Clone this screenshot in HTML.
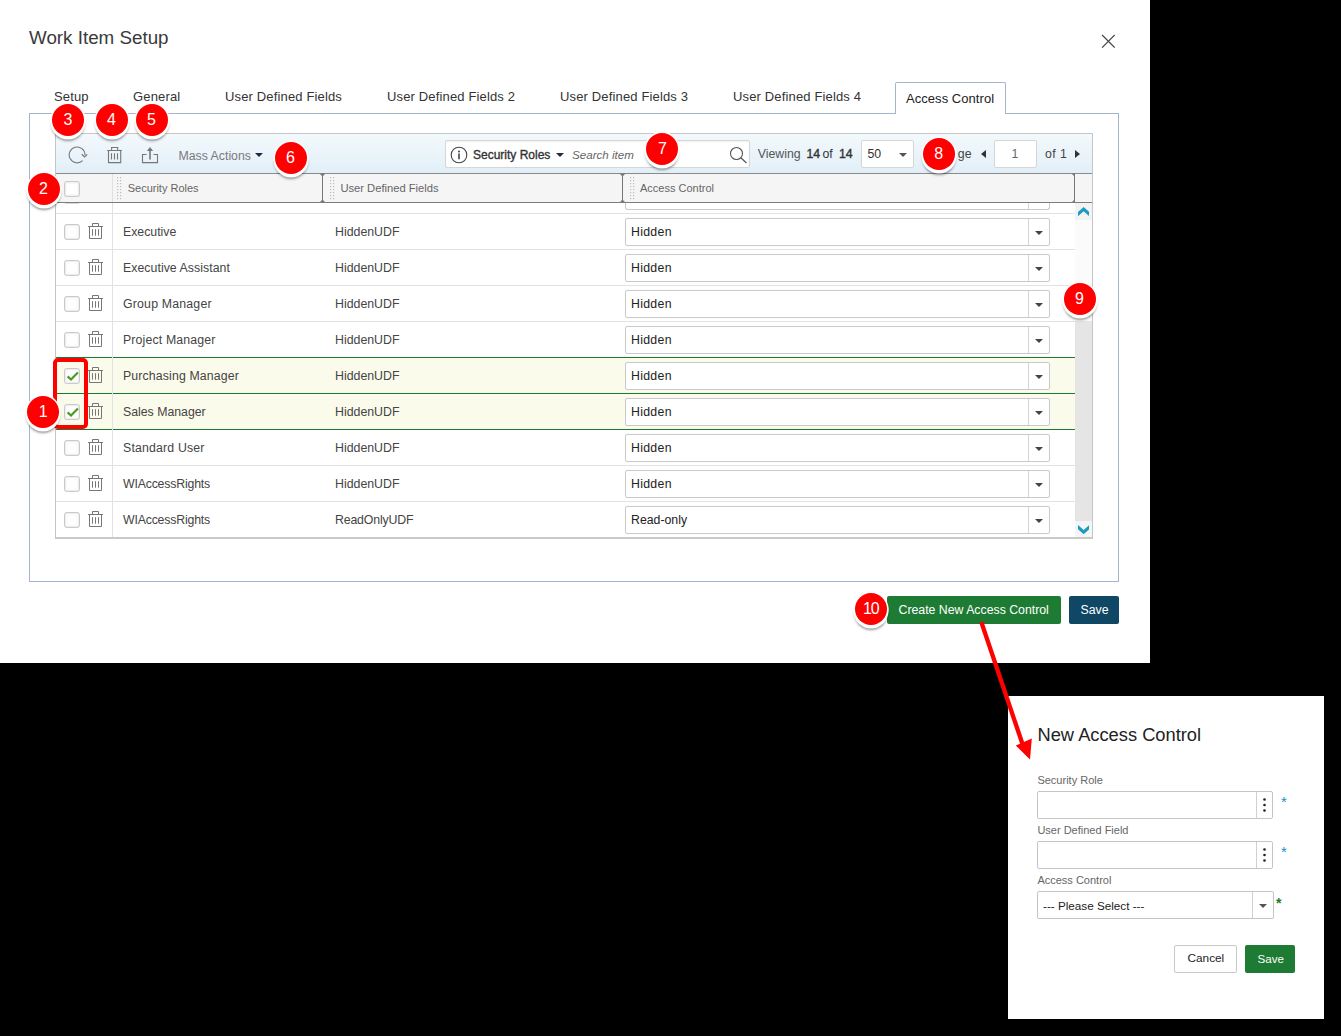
<!DOCTYPE html>
<html><head><meta charset="utf-8">
<style>
*{box-sizing:border-box;margin:0;padding:0}
html,body{width:1341px;height:1036px;overflow:hidden;background:#000;font-family:"Liberation Sans",sans-serif;color:#333}
.a{position:absolute}
.t{position:absolute;white-space:nowrap;line-height:1}
#dlg{left:0;top:0;width:1150px;height:663px;background:#fff}
.tab{position:absolute;top:90px;font-size:13px;color:#333;letter-spacing:0.15px;white-space:nowrap;line-height:14px}
.cb{position:absolute;width:16px;height:16px;border:1px solid #c9c9c9;border-radius:2.5px;background:#fff;box-shadow:inset 0 0 3px rgba(0,0,0,.17)}
.row{position:absolute;left:56px;width:1019px;height:36px;border-top:1px solid #e3e3e3}
.mk{position:absolute;width:32px;height:32px;border-radius:50%;background:#f00;color:#fff;font-size:16px;text-align:center;line-height:32.4px;box-shadow:0 0 0 1.5px #fff,0 2px 0 1.5px #fff,0 4.5px 2.5px 0.5px rgba(0,0,0,.42)}
.sel{position:absolute;left:625px;width:425px;height:28px;border:1px solid #c9c9c9;border-radius:2px;background:#fff}
.sel .v{position:absolute;left:5px;top:6px;font-size:12.3px;color:#222;line-height:14px}
.sel .sp{position:absolute;left:402px;top:0;width:1px;height:26px;background:#d5d5d5}
.caret{position:absolute;width:0;height:0;border-left:4px solid transparent;border-right:4px solid transparent;border-top:4px solid #444}
</style></head>
<body>
<div id="dlg" class="a">
  <div class="t" style="left:29px;top:28.6px;font-size:18.8px;color:#3a3a3a">Work Item Setup</div>
  <!-- close X -->
  <svg class="a" style="left:1101px;top:34px" width="14" height="14" viewBox="0 0 14 14"><path d="M1.1 1L13.7 13.6M13.7 1L1.1 13.6" stroke="#484848" stroke-width="1.25"/></svg>

  <!-- tabs -->
  <div class="tab" style="left:54px">Setup</div>
  <div class="tab" style="left:133px">General</div>
  <div class="tab" style="left:225px">User Defined Fields</div>
  <div class="tab" style="left:387px">User Defined Fields 2</div>
  <div class="tab" style="left:560px">User Defined Fields 3</div>
  <div class="tab" style="left:733px">User Defined Fields 4</div>

  <!-- tab content box -->
  <div class="a" style="left:29px;top:113px;width:1090px;height:469px;border:1px solid #a3b5cf"></div>
  <!-- active tab -->
  <div class="a" style="left:895px;top:82px;width:111px;height:32px;border:1px solid #a3b5cf;border-bottom:none;border-radius:2px 2px 0 0;background:#fff"></div>
  <div class="tab" style="left:906px;top:92px;color:#222;letter-spacing:0.05px">Access Control</div>

  <!-- grid -->
  <div class="a" style="left:55px;top:133px;width:1038px;height:406px;border:1px solid #c6c6c6;border-bottom:2px solid #c9c9c9;background:#fff"></div>
  <!-- toolbar -->
  <div class="a" style="left:56px;top:134px;width:1036px;height:39px;background:linear-gradient(#f3f9fc,#e2eff8)"></div>
  <div class="a" style="left:56px;top:173px;width:1036px;height:1px;background:#8a8a8a"></div>
  <!-- header -->
  <div class="a" style="left:56px;top:174px;width:1036px;height:28px;background:#f5f5f5"></div>
  <div class="a" style="left:56px;top:202px;width:1036px;height:1px;background:#7d7d7d"></div>

  <!-- toolbar icons -->
  <svg class="a" style="left:68px;top:146px" width="20" height="18" viewBox="0 0 20 18"><path d="M17 8.9A7.9 7.9 0 1 0 14.6 14.6" fill="none" stroke="#777" stroke-width="1.1"/><path d="M13.8 8.3L16.6 11L19.2 8.3" fill="none" stroke="#777" stroke-width="1.2"/></svg>
  <svg class="a" style="left:106px;top:146px" width="17" height="18" viewBox="0 0 17 18"><path d="M1.2 4.5H15.9M5.6 4.5V1.5H11.7V4.5M2.5 4.5V16.6H14.7V4.5M5.5 7.2V13.4M8.5 7.2V13.4M11.5 7.2V13.4" fill="none" stroke="#777" stroke-width="1.1"/></svg>
  <svg class="a" style="left:141px;top:146px" width="18" height="18" viewBox="0 0 18 18"><path d="M5.6 8.5H1.5V16.6H16.5V8.5H12.5" fill="none" stroke="#777" stroke-width="1.1"/><path d="M9 13.4V4" stroke="#777" stroke-width="1.6"/><path d="M5.9 5L9 1L12.1 5Z" fill="#777"/></svg>
  <div class="t" style="left:178.5px;top:149.8px;font-size:12.3px;color:#7a7a7a">Mass Actions</div>
  <div class="caret" style="left:255px;top:153px;border-left-width:4px;border-right-width:4px;border-top:4px solid #1c2a44"></div>

  <!-- search box -->
  <div class="a" style="left:445px;top:140px;width:305px;height:28px;border:1px solid #d6d6d6;border-radius:2px;background:#fff;box-shadow:inset 0 1px 2px rgba(0,0,0,.06)"></div>
  <svg class="a" style="left:450px;top:146px" width="18" height="18" viewBox="0 0 18 18"><circle cx="9" cy="9" r="7.8" fill="none" stroke="#444" stroke-width="1.1"/><circle cx="9" cy="5.4" r="1" fill="#444"/><path d="M9 7.6V13.2" stroke="#444" stroke-width="1.6"/></svg>
  <div class="t" style="left:473px;top:148.8px;font-size:12px;color:#333;-webkit-text-stroke:0.35px #333">Security Roles</div>
  <div class="caret" style="left:556px;top:153px;border-top-color:#1c2a44"></div>
  <div class="t" style="left:572px;top:148.6px;font-size:11.6px;font-style:italic;color:#666">Search item</div>
  <svg class="a" style="left:729px;top:146px" width="19" height="18" viewBox="0 0 19 18"><circle cx="7.5" cy="7.5" r="6" fill="none" stroke="#555" stroke-width="1.1"/><path d="M11.8 11.8L17.5 17" stroke="#555" stroke-width="1.2"/></svg>

  <div class="t" style="left:757.8px;top:148.4px;font-size:12.3px;color:#555">Viewing</div>
  <div class="t" style="left:806.5px;top:148.4px;font-size:12.3px;color:#333;-webkit-text-stroke:0.35px #333">14</div><div class="t" style="left:822.4px;top:148.4px;font-size:12.3px;color:#333">of</div><div class="t" style="left:839px;top:148.4px;font-size:12.3px;color:#333;-webkit-text-stroke:0.35px #333">14</div>
  <div class="a" style="left:861px;top:140px;width:53px;height:28px;border:1px solid #d6d6d6;border-radius:2px;background:#fff"></div>
  <div class="t" style="left:867.5px;top:148px;font-size:12.3px;color:#333">50</div>
  <div class="caret" style="left:899px;top:153px;border-top-color:#555"></div>
  <div class="t" style="left:957.8px;top:148.4px;font-size:12.3px;color:#444">ge</div>
  <div class="a" style="left:981px;top:150px;width:0;height:0;border-top:4px solid transparent;border-bottom:4px solid transparent;border-right:5px solid #333"></div>
  <div class="a" style="left:994px;top:140px;width:43px;height:28px;border:1px solid #d6d6d6;border-radius:2px;background:#fff"></div>
  <div class="t" style="left:1011.5px;top:148.4px;font-size:12.3px;color:#666">1</div>
  <div class="t" style="left:1045px;top:148.4px;font-size:12.3px;color:#444;letter-spacing:0.45px">of 1</div>
  <div class="a" style="left:1075px;top:150px;width:0;height:0;border-top:4px solid transparent;border-bottom:4px solid transparent;border-left:5px solid #333"></div>

  <!-- header contents -->
  <div class="cb" style="left:64px;top:181px"></div>
  <div class="a" style="left:112px;top:174px;width:1px;height:28px;background:#e0e0e0"></div>
  <svg class="a" style="left:116.5px;top:177.3px" width="5" height="23" fill="#bdbdbd"><rect x="0" y="0" width="1.2" height="1.2"/><rect x="3" y="0" width="1.2" height="1.2"/><rect x="0" y="3" width="1.2" height="1.2"/><rect x="3" y="3" width="1.2" height="1.2"/><rect x="0" y="6" width="1.2" height="1.2"/><rect x="3" y="6" width="1.2" height="1.2"/><rect x="0" y="9" width="1.2" height="1.2"/><rect x="3" y="9" width="1.2" height="1.2"/><rect x="0" y="12" width="1.2" height="1.2"/><rect x="3" y="12" width="1.2" height="1.2"/><rect x="0" y="15" width="1.2" height="1.2"/><rect x="3" y="15" width="1.2" height="1.2"/><rect x="0" y="18" width="1.2" height="1.2"/><rect x="3" y="18" width="1.2" height="1.2"/><rect x="0" y="21" width="1.2" height="1.2"/><rect x="3" y="21" width="1.2" height="1.2"/></svg>
  <div class="t" style="left:127.7px;top:182.7px;font-size:11px;color:#666">Security Roles</div>
  <svg class="a" style="left:319px;top:173px" width="7" height="30" viewBox="0 0 7 30"><path d="M0.5 0.5H6.5L3.5 3.5ZM0.5 29.5H6.5L3.5 26.5Z" fill="#777"/><path d="M3.5 1V29" stroke="#777" stroke-width="1"/></svg>
  <svg class="a" style="left:329.5px;top:177.3px" width="5" height="23" fill="#bdbdbd"><rect x="0" y="0" width="1.2" height="1.2"/><rect x="3" y="0" width="1.2" height="1.2"/><rect x="0" y="3" width="1.2" height="1.2"/><rect x="3" y="3" width="1.2" height="1.2"/><rect x="0" y="6" width="1.2" height="1.2"/><rect x="3" y="6" width="1.2" height="1.2"/><rect x="0" y="9" width="1.2" height="1.2"/><rect x="3" y="9" width="1.2" height="1.2"/><rect x="0" y="12" width="1.2" height="1.2"/><rect x="3" y="12" width="1.2" height="1.2"/><rect x="0" y="15" width="1.2" height="1.2"/><rect x="3" y="15" width="1.2" height="1.2"/><rect x="0" y="18" width="1.2" height="1.2"/><rect x="3" y="18" width="1.2" height="1.2"/><rect x="0" y="21" width="1.2" height="1.2"/><rect x="3" y="21" width="1.2" height="1.2"/></svg>
  <div class="t" style="left:340.4px;top:182.7px;font-size:11.2px;color:#666">User Defined Fields</div>
  <svg class="a" style="left:619px;top:173px" width="7" height="30" viewBox="0 0 7 30"><path d="M0.5 0.5H6.5L3.5 3.5ZM0.5 29.5H6.5L3.5 26.5Z" fill="#777"/><path d="M3.5 1V29" stroke="#777" stroke-width="1"/></svg>
  <svg class="a" style="left:629.5px;top:177.3px" width="5" height="23" fill="#bdbdbd"><rect x="0" y="0" width="1.2" height="1.2"/><rect x="3" y="0" width="1.2" height="1.2"/><rect x="0" y="3" width="1.2" height="1.2"/><rect x="3" y="3" width="1.2" height="1.2"/><rect x="0" y="6" width="1.2" height="1.2"/><rect x="3" y="6" width="1.2" height="1.2"/><rect x="0" y="9" width="1.2" height="1.2"/><rect x="3" y="9" width="1.2" height="1.2"/><rect x="0" y="12" width="1.2" height="1.2"/><rect x="3" y="12" width="1.2" height="1.2"/><rect x="0" y="15" width="1.2" height="1.2"/><rect x="3" y="15" width="1.2" height="1.2"/><rect x="0" y="18" width="1.2" height="1.2"/><rect x="3" y="18" width="1.2" height="1.2"/><rect x="0" y="21" width="1.2" height="1.2"/><rect x="3" y="21" width="1.2" height="1.2"/></svg>
  <div class="t" style="left:640px;top:182.7px;font-size:11px;color:#666">Access Control</div>
  <svg class="a" style="left:1071px;top:173px" width="7" height="30" viewBox="0 0 7 30"><path d="M0.5 0.5H3.5V3.5ZM0.5 29.5H3.5V26.5Z" fill="#777"/><path d="M3.5 1V29" stroke="#777" stroke-width="1"/></svg>
<div class="a" style="left:56px;top:213px;width:1019px;height:36px;background:#fff"></div><div class="a" style="left:56px;top:213px;width:1019px;height:1px;background:#e2e2e2"></div><div class="cb" style="left:64px;top:224px"></div><svg class="a" style="left:87px;top:222px" width="17" height="18" viewBox="0 0 17 18"><path d="M1 4.5H16M5.5 4.5V1.5H11.5V4.5M2.5 4.5V16.5H14.5V4.5M5.5 7.2V13.7M8.5 7.2V13.7M11.5 7.2V13.7" fill="none" stroke="#777" stroke-width="1"/></svg><div class="t" style="left:123px;top:226px;font-size:12.3px;color:#444;letter-spacing:0px">Executive</div><div class="t" style="left:335px;top:226px;font-size:12.35px;color:#444;letter-spacing:0px">HiddenUDF</div><div class="sel" style="top:218px"><div class="v" style="letter-spacing:0.3px">Hidden</div><div class="sp"></div><div class="caret" style="left:409px;top:12px"></div></div><div class="a" style="left:56px;top:249px;width:1019px;height:36px;background:#fff"></div><div class="a" style="left:56px;top:249px;width:1019px;height:1px;background:#e2e2e2"></div><div class="cb" style="left:64px;top:260px"></div><svg class="a" style="left:87px;top:258px" width="17" height="18" viewBox="0 0 17 18"><path d="M1 4.5H16M5.5 4.5V1.5H11.5V4.5M2.5 4.5V16.5H14.5V4.5M5.5 7.2V13.7M8.5 7.2V13.7M11.5 7.2V13.7" fill="none" stroke="#777" stroke-width="1"/></svg><div class="t" style="left:123px;top:262px;font-size:12.3px;color:#444;letter-spacing:0.05px">Executive Assistant</div><div class="t" style="left:335px;top:262px;font-size:12.35px;color:#444;letter-spacing:0px">HiddenUDF</div><div class="sel" style="top:254px"><div class="v" style="letter-spacing:0.3px">Hidden</div><div class="sp"></div><div class="caret" style="left:409px;top:12px"></div></div><div class="a" style="left:56px;top:285px;width:1019px;height:36px;background:#fff"></div><div class="a" style="left:56px;top:285px;width:1019px;height:1px;background:#e2e2e2"></div><div class="cb" style="left:64px;top:296px"></div><svg class="a" style="left:87px;top:294px" width="17" height="18" viewBox="0 0 17 18"><path d="M1 4.5H16M5.5 4.5V1.5H11.5V4.5M2.5 4.5V16.5H14.5V4.5M5.5 7.2V13.7M8.5 7.2V13.7M11.5 7.2V13.7" fill="none" stroke="#777" stroke-width="1"/></svg><div class="t" style="left:123px;top:298px;font-size:12.3px;color:#444;letter-spacing:0.2px">Group Manager</div><div class="t" style="left:335px;top:298px;font-size:12.35px;color:#444;letter-spacing:0px">HiddenUDF</div><div class="sel" style="top:290px"><div class="v" style="letter-spacing:0.3px">Hidden</div><div class="sp"></div><div class="caret" style="left:409px;top:12px"></div></div><div class="a" style="left:56px;top:321px;width:1019px;height:36px;background:#fff"></div><div class="a" style="left:56px;top:321px;width:1019px;height:1px;background:#e2e2e2"></div><div class="cb" style="left:64px;top:332px"></div><svg class="a" style="left:87px;top:330px" width="17" height="18" viewBox="0 0 17 18"><path d="M1 4.5H16M5.5 4.5V1.5H11.5V4.5M2.5 4.5V16.5H14.5V4.5M5.5 7.2V13.7M8.5 7.2V13.7M11.5 7.2V13.7" fill="none" stroke="#777" stroke-width="1"/></svg><div class="t" style="left:123px;top:334px;font-size:12.3px;color:#444;letter-spacing:0.16px">Project Manager</div><div class="t" style="left:335px;top:334px;font-size:12.35px;color:#444;letter-spacing:0px">HiddenUDF</div><div class="sel" style="top:326px"><div class="v" style="letter-spacing:0.3px">Hidden</div><div class="sp"></div><div class="caret" style="left:409px;top:12px"></div></div><div class="a" style="left:56px;top:357px;width:1019px;height:36px;background:#fbfbeb"></div><div class="a" style="left:56px;top:357px;width:1019px;height:1px;background:#1d7a35"></div><div class="cb" style="left:64px;top:368px"></div><svg class="a" style="left:66px;top:371px" width="14" height="12" viewBox="0 0 14 12"><path d="M1.6 5.4L5 8.5L11.9 1.4" fill="none" stroke="#4a991f" stroke-width="2.1"/></svg><svg class="a" style="left:87px;top:366px" width="17" height="18" viewBox="0 0 17 18"><path d="M1 4.5H16M5.5 4.5V1.5H11.5V4.5M2.5 4.5V16.5H14.5V4.5M5.5 7.2V13.7M8.5 7.2V13.7M11.5 7.2V13.7" fill="none" stroke="#777" stroke-width="1"/></svg><div class="t" style="left:123px;top:370px;font-size:12.3px;color:#444;letter-spacing:0.14px">Purchasing Manager</div><div class="t" style="left:335px;top:370px;font-size:12.35px;color:#444;letter-spacing:0px">HiddenUDF</div><div class="sel" style="top:362px"><div class="v" style="letter-spacing:0.3px">Hidden</div><div class="sp"></div><div class="caret" style="left:409px;top:12px"></div></div><div class="a" style="left:56px;top:393px;width:1019px;height:36px;background:#fbfbeb"></div><div class="a" style="left:56px;top:393px;width:1019px;height:1px;background:#1d7a35"></div><div class="cb" style="left:64px;top:404px"></div><svg class="a" style="left:66px;top:407px" width="14" height="12" viewBox="0 0 14 12"><path d="M1.6 5.4L5 8.5L11.9 1.4" fill="none" stroke="#4a991f" stroke-width="2.1"/></svg><svg class="a" style="left:87px;top:402px" width="17" height="18" viewBox="0 0 17 18"><path d="M1 4.5H16M5.5 4.5V1.5H11.5V4.5M2.5 4.5V16.5H14.5V4.5M5.5 7.2V13.7M8.5 7.2V13.7M11.5 7.2V13.7" fill="none" stroke="#777" stroke-width="1"/></svg><div class="t" style="left:123px;top:406px;font-size:12.3px;color:#444;letter-spacing:0px">Sales Manager</div><div class="t" style="left:335px;top:406px;font-size:12.35px;color:#444;letter-spacing:0px">HiddenUDF</div><div class="sel" style="top:398px"><div class="v" style="letter-spacing:0.3px">Hidden</div><div class="sp"></div><div class="caret" style="left:409px;top:12px"></div></div><div class="a" style="left:56px;top:429px;width:1019px;height:36px;background:#fff"></div><div class="a" style="left:56px;top:429px;width:1019px;height:1px;background:#e2e2e2"></div><div class="cb" style="left:64px;top:440px"></div><svg class="a" style="left:87px;top:438px" width="17" height="18" viewBox="0 0 17 18"><path d="M1 4.5H16M5.5 4.5V1.5H11.5V4.5M2.5 4.5V16.5H14.5V4.5M5.5 7.2V13.7M8.5 7.2V13.7M11.5 7.2V13.7" fill="none" stroke="#777" stroke-width="1"/></svg><div class="t" style="left:123px;top:442px;font-size:12.3px;color:#444;letter-spacing:0.18px">Standard User</div><div class="t" style="left:335px;top:442px;font-size:12.35px;color:#444;letter-spacing:0px">HiddenUDF</div><div class="sel" style="top:434px"><div class="v" style="letter-spacing:0.3px">Hidden</div><div class="sp"></div><div class="caret" style="left:409px;top:12px"></div></div><div class="a" style="left:56px;top:465px;width:1019px;height:36px;background:#fff"></div><div class="a" style="left:56px;top:465px;width:1019px;height:1px;background:#e2e2e2"></div><div class="cb" style="left:64px;top:476px"></div><svg class="a" style="left:87px;top:474px" width="17" height="18" viewBox="0 0 17 18"><path d="M1 4.5H16M5.5 4.5V1.5H11.5V4.5M2.5 4.5V16.5H14.5V4.5M5.5 7.2V13.7M8.5 7.2V13.7M11.5 7.2V13.7" fill="none" stroke="#777" stroke-width="1"/></svg><div class="t" style="left:123px;top:478px;font-size:12.3px;color:#444;letter-spacing:-0.18px">WIAccessRights</div><div class="t" style="left:335px;top:478px;font-size:12.35px;color:#444;letter-spacing:0px">HiddenUDF</div><div class="sel" style="top:470px"><div class="v" style="letter-spacing:0.3px">Hidden</div><div class="sp"></div><div class="caret" style="left:409px;top:12px"></div></div><div class="a" style="left:56px;top:501px;width:1019px;height:36px;background:#fff"></div><div class="a" style="left:56px;top:501px;width:1019px;height:1px;background:#e2e2e2"></div><div class="cb" style="left:64px;top:512px"></div><svg class="a" style="left:87px;top:510px" width="17" height="18" viewBox="0 0 17 18"><path d="M1 4.5H16M5.5 4.5V1.5H11.5V4.5M2.5 4.5V16.5H14.5V4.5M5.5 7.2V13.7M8.5 7.2V13.7M11.5 7.2V13.7" fill="none" stroke="#777" stroke-width="1"/></svg><div class="t" style="left:123px;top:514px;font-size:12.3px;color:#444;letter-spacing:-0.18px">WIAccessRights</div><div class="t" style="left:335px;top:514px;font-size:12.35px;color:#444;letter-spacing:-0.18px">ReadOnlyUDF</div><div class="sel" style="top:506px"><div class="v" style="letter-spacing:0px">Read-only</div><div class="sp"></div><div class="caret" style="left:409px;top:12px"></div></div><div class="a" style="left:56px;top:357px;width:1019px;height:1px;background:#1d7a35"></div><div class="a" style="left:56px;top:393px;width:1019px;height:1px;background:#1d7a35"></div><div class="a" style="left:56px;top:393px;width:1019px;height:1px;background:#1d7a35"></div><div class="a" style="left:56px;top:429px;width:1019px;height:1px;background:#1d7a35"></div><div class="a" style="left:112px;top:203px;width:1px;height:334px;background:#e2e2e2"></div>  <!-- partial row at top -->
  <div class="a" style="left:65px;top:203px;width:14px;height:1px;background:#d8d8d8"></div>
  <div class="a" style="left:625px;top:203px;width:425px;height:7px;border:1px solid #c9c9c9;border-top:none;border-radius:0 0 3px 3px"></div>
  <div class="a" style="left:1028px;top:203px;width:1px;height:6px;background:#d5d5d5"></div>
  <!-- header bottom border (redraw above partial row) -->
  <div class="a" style="left:56px;top:202px;width:1036px;height:1px;background:#7d7d7d"></div>
  <!-- scrollbar -->
  <div class="a" style="left:1075px;top:203px;width:17px;height:334px;background:#fbfbfb"></div>
  <div class="a" style="left:1075px;top:203px;width:17px;height:17px;background:#f3f3f3"></div>
  <div class="a" style="left:1075px;top:321px;width:17px;height:200px;background:#e5e5e5"></div>
  <div class="a" style="left:1075px;top:521px;width:17px;height:16px;background:#f5f5f5"></div>
  <svg class="a" style="left:1077.9px;top:207px" width="11.3" height="9.2" viewBox="0 0 11.3 9.2"><path d="M0 9.2V5L5.65 0L11.3 5V9.2L5.65 4.2Z" fill="#1a9cc2"/></svg>
  <svg class="a" style="left:1077.9px;top:524.8px" width="11.3" height="9.2" viewBox="0 0 11.3 9.2"><path d="M0 0V4.2L5.65 9.2L11.3 4.2V0L5.65 5Z" fill="#1a9cc2"/></svg>

  <!-- buttons -->
  <div class="a" style="left:887px;top:596px;width:174px;height:28px;background:#1e7b34;border-radius:2px"></div>
  <div class="t" style="left:898.5px;top:604px;font-size:12.3px;color:#fff">Create New Access Control</div>
  <div class="a" style="left:1069px;top:596px;width:50px;height:28px;background:#0f4764;border-radius:2px"></div>
  <div class="t" style="left:1080.5px;top:604px;font-size:12.3px;color:#fff">Save</div>

  <!-- red box around checkboxes -->
  <div class="a" style="left:53px;top:358px;width:35px;height:71px;border:4px solid #f00;border-radius:5px"></div>

  <!-- markers -->
  <div class="mk" style="left:52px;top:104px">3</div>
  <div class="mk" style="left:95.5px;top:104px">4</div>
  <div class="mk" style="left:135.5px;top:104px">5</div>
  <div class="mk" style="left:27.5px;top:172.5px">2</div>
  <div class="mk" style="left:274.5px;top:142px">6</div>
  <div class="mk" style="left:646.4px;top:133.2px">7</div>
  <div class="mk" style="left:922.7px;top:137.7px">8</div>
  <div class="mk" style="left:1063.5px;top:282.7px">9</div>
  <div class="mk" style="left:27.3px;top:395.8px">1</div>
  <div class="mk" style="left:855.3px;top:593.3px;letter-spacing:-1.2px;text-indent:-1.2px">10</div>
</div>

<!-- second dialog -->
<div class="a" style="left:1008px;top:696px;width:316px;height:323px;background:#fff">
</div>
<div class="t" style="left:1037.5px;top:725.5px;font-size:18.3px;color:#222">New Access Control</div>
<div class="t" style="left:1037.4px;top:774.9px;font-size:11px;color:#666">Security Role</div>
<div class="a" style="left:1037px;top:791px;width:236px;height:28px;border:1px solid #c5c5c5;border-radius:2px"></div>
<div class="a" style="left:1256px;top:792px;width:1px;height:26px;background:#d0d0d0"></div>
<svg class="a" style="left:1262px;top:797px" width="5" height="16" viewBox="0 0 5 16"><circle cx="2.5" cy="2.5" r="1.3" fill="#222"/><circle cx="2.5" cy="8" r="1.3" fill="#222"/><circle cx="2.5" cy="13.5" r="1.3" fill="#222"/></svg>
<div class="t" style="left:1281px;top:794px;font-size:15px;color:#1a8fc6">*</div>
<div class="t" style="left:1037.4px;top:824.7px;font-size:11px;color:#666">User Defined Field</div>
<div class="a" style="left:1037px;top:841px;width:236px;height:28px;border:1px solid #c5c5c5;border-radius:2px"></div>
<div class="a" style="left:1256px;top:842px;width:1px;height:26px;background:#d0d0d0"></div>
<svg class="a" style="left:1262px;top:847px" width="5" height="16" viewBox="0 0 5 16"><circle cx="2.5" cy="2.5" r="1.3" fill="#222"/><circle cx="2.5" cy="8" r="1.3" fill="#222"/><circle cx="2.5" cy="13.5" r="1.3" fill="#222"/></svg>
<div class="t" style="left:1281px;top:844px;font-size:15px;color:#1a8fc6">*</div>
<div class="t" style="left:1037.4px;top:874.7px;font-size:11px;color:#666">Access Control</div>
<div class="a" style="left:1037px;top:891px;width:237px;height:28px;border:1px solid #c5c5c5;border-radius:2px"></div>
<div class="a" style="left:1252px;top:892px;width:1px;height:26px;background:#d0d0d0"></div>
<div class="caret" style="left:1259px;top:904px;border-top-color:#555"></div>
<div class="t" style="left:1043px;top:900px;font-size:11.7px;color:#222">--- Please Select ---</div>
<div class="t" style="left:1276px;top:896px;font-size:14px;font-weight:bold;color:#1e7b34">*</div>
<div class="a" style="left:1174px;top:945px;width:63px;height:28px;border:1px solid #c8c8c8;border-radius:2px;background:#fff"></div>
<div class="t" style="left:1187.5px;top:953px;font-size:11.8px;color:#222">Cancel</div>
<div class="a" style="left:1245px;top:945px;width:50px;height:28px;background:#1e7b34;border-radius:2px"></div>
<div class="t" style="left:1257.5px;top:953px;font-size:11.6px;color:#fff">Save</div>
<!-- arrow -->
<svg class="a" style="left:0;top:0" width="1341" height="1036" viewBox="0 0 1341 1036"><path d="M981.3 622L1023.5 747" stroke="#f00" stroke-width="4.3"/><path d="M1030 759.5L1015.8 745.6L1031.8 738.5Z" fill="#f00"/></svg>

</body></html>
